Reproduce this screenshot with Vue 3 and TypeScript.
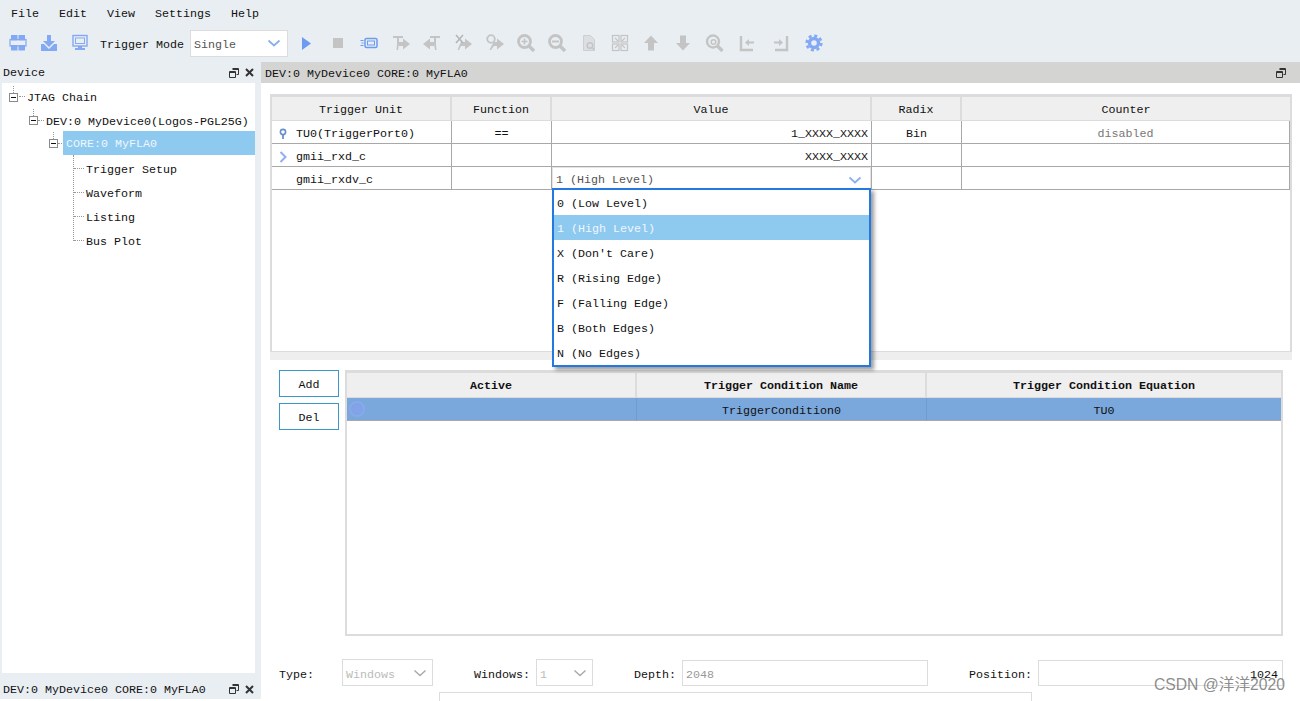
<script setup lang="ts">
const menus: string[] = ['File', 'Edit', 'View', 'Settings', 'Help']
const leaves: string[] = ['Trigger Setup', 'Waveform', 'Listing', 'Bus Plot']
const options: string[] = [
  '0 (Low Level)',
  '1 (High Level)',
  "X (Don't Care)",
  'R (Rising Edge)',
  'F (Falling Edge)',
  'B (Both Edges)',
  'N (No Edges)'
]
const headers: string[] = ['Trigger Unit', 'Function', 'Value', 'Radix', 'Counter']
const condHeaders: string[] = ['Active', 'Trigger Condition Name', 'Trigger Condition Equation']
</script>

<template>
  <div class="app">
    <div class="menubar">
      <span v-for="m in menus" :key="m">{{ m }}</span>
    </div>

    <div class="toolbar">
      <span class="tool">
        <svg width="20" height="20" viewBox="0 0 20 20"><g class="blue"><rect x="3" y="2" width="6.500" height="5.500"/><rect x="10.500" y="2" width="6.500" height="5.500"/><rect x="3" y="12" width="6.500" height="5.500"/><rect x="10.500" y="12" width="6.500" height="5.500"/></g><rect x="2" y="6.500" width="16" height="6.500" fill="none" stroke="#84a9f4" stroke-width="1.200"/></svg>
      </span>
      <span class="tool">
        <svg width="20" height="20" viewBox="0 0 20 20"><g class="blue"><path d="M8 2h4v6h4l-6 6-6-6h4z"/><path d="M2 11h3l5 5 5-5h3v7H2z"/></g></svg>
      </span>
      <span class="tool">
        <svg width="20" height="20" viewBox="0 0 20 20"><g fill="none" stroke="#84a9f4"><rect x="3" y="2.500" width="14" height="10.500" stroke-width="1.400"/><rect x="5.500" y="5" width="9" height="5.500"/></g><g class="blue"><rect x="8" y="13" width="4" height="2"/><rect x="5" y="15" width="10" height="2"/></g></svg>
      </span>
      <span class="trig-label">Trigger Mode</span>
      <div class="combo mode">
        <span>Single</span>
        <svg width="14" height="8" viewBox="0 0 14 8"><path d="M1.500 1.500 7 6.500l5.500-5" fill="none" stroke="#8ab0f0" stroke-width="1.800"/></svg>
      </div>
      <div class="tools">
        <span class="tool"><svg width="20" height="20" viewBox="0 0 20 20"><path d="M5 4l9 6.500L5 17z" fill="#6e9bf0"/></svg></span>
        <span class="tool"><svg width="20" height="20" viewBox="0 0 20 20"><rect x="5" y="5" width="10" height="10" fill="#c4c4c4"/></svg></span>
        <span class="tool"><svg width="20" height="20" viewBox="0 0 20 20"><g fill="none" stroke="#6e9bf0"><rect x="6" y="5.500" width="12" height="9" rx="1.500" stroke-width="1.500"/><rect x="8.500" y="8" width="7" height="4"/><path d="M1.500 7.500h3M2.500 10h2M1.500 12.500h3"/></g></svg></span>
        <span class="tool"><svg width="20" height="20" viewBox="0 0 20 20"><g class="gray"><path d="M2 3h10v2H8v6l-1 6H5.500l.5-6V5H2z"/><path d="M8 9h4V5.500l7 5.500-7 5.500V13H8z"/></g></svg></span>
        <span class="tool"><svg width="20" height="20" viewBox="0 0 20 20"><g class="gray"><path d="M18 3H8v2h4v6l1 6h1.500l-.5-6V5h4z"/><path d="M12 9H8V5.500L1 11l7 5.500V13h4z"/></g></svg></span>
        <span class="tool"><svg width="20" height="20" viewBox="0 0 20 20"><g class="gray"><path d="M8 9h4V5.500l7 5.500-7 5.500V13H8l-2 4H4.500l2-5z"/></g><path d="M3 2l7 8M10 2l-7 8" stroke="#b4b4b4" stroke-width="1.500"/></svg></span>
        <span class="tool"><svg width="20" height="20" viewBox="0 0 20 20"><g class="gray"><path d="M9 9h3V5.500l7 5.500-7 5.500V13H9l-3 4H4.500l2.500-5z"/></g><circle cx="6" cy="6" r="3.800" fill="none" stroke="#c4c4c4" stroke-width="1.800"/></svg></span>
        <span class="tool"><svg width="20" height="20" viewBox="0 0 20 20"><circle cx="8.500" cy="8.500" r="6" fill="none" stroke="#c4c4c4" stroke-width="2.800"/><path d="M13 13l5 5" stroke="#c4c4c4" stroke-width="3.400"/><path d="M5.500 8.500h6M8.500 5.500v6" stroke="#c4c4c4" stroke-width="1.600"/></svg></span>
        <span class="tool"><svg width="20" height="20" viewBox="0 0 20 20"><circle cx="8.500" cy="8.500" r="6" fill="none" stroke="#c4c4c4" stroke-width="2.800"/><path d="M13 13l5 5" stroke="#c4c4c4" stroke-width="3.400"/><path d="M5 8.500h7" stroke="#c4c4c4" stroke-width="2"/></svg></span>
        <span class="tool"><svg width="20" height="20" viewBox="0 0 20 20"><path d="M4.500 2.500h7l4 4v11h-11z" fill="#dcdfe2" stroke="#cfcfcf"/><circle cx="11" cy="12.500" r="2.800" fill="none" stroke="#c4c4c4" stroke-width="1.500"/><path d="M13 14.500l2.500 2.500" stroke="#c4c4c4" stroke-width="1.500"/></svg></span>
        <span class="tool"><svg width="20" height="20" viewBox="0 0 20 20"><g fill="none" stroke="#c4c4c4" stroke-width="1.200"><rect x="2.500" y="2.500" width="6.500" height="6.500"/><rect x="11" y="2.500" width="6.500" height="6.500"/><rect x="2.500" y="11" width="6.500" height="6.500"/><rect x="11" y="11" width="6.500" height="6.500"/><path d="M8 8 5 5M12 8l3-3M8 12l-3 3M12 12l3 3"/></g></svg></span>
        <span class="tool"><svg width="20" height="20" viewBox="0 0 20 20"><path d="M10 2.500l7 7.500h-4v7.500H7V10H3z" fill="#c4c4c4"/></svg></span>
        <span class="tool"><svg width="20" height="20" viewBox="0 0 20 20"><path d="M10 17.500L3 10h4V2.500h6V10h4z" fill="#c4c4c4"/></svg></span>
        <span class="tool"><svg width="20" height="20" viewBox="0 0 20 20"><circle cx="9" cy="8.500" r="6" fill="none" stroke="#c4c4c4" stroke-width="2.400"/><circle cx="9.500" cy="9" r="2.300" fill="none" stroke="#c4c4c4" stroke-width="1.500"/><path d="M13.500 13l5 5" stroke="#c4c4c4" stroke-width="3.400"/></svg></span>
        <span class="tool"><svg width="20" height="20" viewBox="0 0 20 20"><path d="M4 3v14h12" fill="none" stroke="#c4c4c4" stroke-width="2.400"/><path d="M8 9.500l4-3.500v2.500h5v2h-5V13z" fill="#c4c4c4"/></svg></span>
        <span class="tool"><svg width="20" height="20" viewBox="0 0 20 20"><path d="M16 3v14H4" fill="none" stroke="#c4c4c4" stroke-width="2.400"/><path d="M12 9.500L8 6v2.500H3v2h5V13z" fill="#c4c4c4"/></svg></span>
        <span class="tool"><svg width="20" height="20" viewBox="0 0 20 20"><circle cx="10" cy="10" r="4.500" fill="none" stroke="#84a9f4" stroke-width="3.400"/><circle cx="10" cy="10" r="7.300" fill="none" stroke="#84a9f4" stroke-width="2.600" stroke-dasharray="3.100 2.630"/></svg></span>
      </div>
    </div>

    <div class="workspace">
      <aside class="side">
        <div class="dock-head">
          <span>Device</span>
          <span class="dock-icons">
            <svg width="10" height="10" viewBox="0 0 10 10"><path d="M3.500.5h6v6h-2M.5 3.500h6v6h-6z M.5 4.500h6M3.500 1.500h6" fill="none" stroke="#333"/></svg>
            <svg width="9" height="9" viewBox="0 0 9 9"><path d="M1 1l7 7M8 1L1 8" stroke="#333" stroke-width="2"/></svg>
          </span>
        </div>
        <div class="tree">
          <div class="node n0"><i class="box"></i><span class="lbl">JTAG Chain</span></div>
          <div class="node n1"><i class="box"></i><span class="lbl">DEV:0 MyDevice0(Logos-PGL25G)</span></div>
          <div class="node n2"><i class="box"></i><span class="lbl sel">CORE:0 MyFLA0</span></div>
          <div class="leaves">
            <div v-for="l in leaves" :key="l" class="leaf">{{ l }}</div>
          </div>
        </div>
        <div class="dock-head bottom">
          <span class="bottom-text">DEV:0 MyDevice0 CORE:0 MyFLA0</span>
          <span class="dock-icons">
            <svg width="10" height="10" viewBox="0 0 10 10"><path d="M3.500.5h6v6h-2M.5 3.500h6v6h-6z M.5 4.500h6M3.500 1.500h6" fill="none" stroke="#333"/></svg>
            <svg width="9" height="9" viewBox="0 0 9 9"><path d="M1 1l7 7M8 1L1 8" stroke="#333" stroke-width="2"/></svg>
          </span>
        </div>
      </aside>

      <main class="main">
        <div class="title">
          <span>DEV:0 MyDevice0 CORE:0 MyFLA0</span>
          <svg width="10" height="10" viewBox="0 0 10 10"><path d="M3.500.5h6v6h-2M.5 3.500h6v6h-6z M.5 4.500h6M3.500 1.500h6" fill="none" stroke="#333"/></svg>
        </div>

        <section class="units">
          <div class="grid">
            <div v-for="h in headers" :key="h" class="th">{{ h }}</div>

            <div class="td first">
              <svg class="row-icon" width="10" height="12" viewBox="0 0 10 12"><circle cx="5" cy="4" r="2.600" fill="none" stroke="#6a8fcb" stroke-width="1.600"/><path d="M5 6.500V11" stroke="#6a8fcb" stroke-width="1.800"/></svg>
              <span>TU0(TriggerPort0)</span>
            </div>
            <div class="td center">==</div>
            <div class="td right">1_XXXX_XXXX</div>
            <div class="td center">Bin</div>
            <div class="td center muted">disabled</div>

            <div class="td first">
              <svg class="row-icon" width="10" height="12" viewBox="0 0 10 12"><path d="M2.500 1l5 5-5 5" fill="none" stroke="#8eb0f0" stroke-width="2"/></svg>
              <span>gmii_rxd_c</span>
            </div>
            <div class="td"></div>
            <div class="td right">XXXX_XXXX</div>
            <div class="td"></div>
            <div class="td"></div>

            <div class="td first">
              <span class="row-icon"></span>
              <span>gmii_rxdv_c</span>
            </div>
            <div class="td"></div>
            <div class="td combo-cell">
              <div class="cell-combo">
                <span>1 (High Level)</span>
                <svg width="14" height="8" viewBox="0 0 14 8"><path d="M1.500 1.500 7 6.500l5.500-5" fill="none" stroke="#8ab0f0" stroke-width="1.800"/></svg>
              </div>
              <ul class="popup">
                <li v-for="(o, i) in options" :key="o" :class="{ on: i === 1 }">{{ o }}</li>
              </ul>
            </div>
            <div class="td"></div>
            <div class="td"></div>
          </div>
        </section>
        <div class="strip"></div>

        <section class="conds">
          <div class="btns">
            <button type="button">Add</button>
            <button type="button">Del</button>
          </div>
          <div class="cond-table">
            <div class="cond-grid">
              <div v-for="h in condHeaders" :key="h" class="cth">{{ h }}</div>
              <div class="ctd act"><span class="radio"><span></span></span></div>
              <div class="ctd">TriggerCondition0</div>
              <div class="ctd end">TU0</div>
            </div>
          </div>
        </section>

        <section class="form">
          <label class="f-type">Type:</label>
          <div class="combo off w-type"><span>Windows</span><svg width="14" height="8" viewBox="0 0 14 8"><path d="M1.500 1.500 7 6.500l5.500-5" fill="none" stroke="#aaa" stroke-width="1.500"/></svg></div>
          <label>Windows:</label>
          <div class="combo off w-win"><span>1</span><svg width="14" height="8" viewBox="0 0 14 8"><path d="M1.500 1.500 7 6.500l5.500-5" fill="none" stroke="#aaa" stroke-width="1.500"/></svg></div>
          <label>Depth:</label>
          <div class="field depth">2048</div>
          <label>Position:</label>
          <div class="field pos">1024</div>
        </section>
        <div class="extra"></div>
      </main>
    </div>

    <div class="watermark">CSDN @洋洋2020</div>
  </div>
</template>

<style>
html, body { margin: 0; overflow: hidden; background: #e9eef2; }
</style>

<style scoped>
.app {
  position: relative;
  width: 1300px;
  height: 701px;
  overflow: hidden;
  background: #e9eef2;
  color: #111;
  font-family: "Liberation Mono", monospace;
  font-size: 11.67px;
  line-height: 14px;
  display: flex;
  flex-direction: column;
}
.menubar {
  height: 28px;
  display: flex;
  align-items: center;
  gap: 20px;
  padding: 0 0 2px 11px;
  box-sizing: border-box;
}
.menubar span { padding-top: 2px; }
.toolbar {
  height: 34px;
  display: flex;
  align-items: center;
  padding: 0 0 4px 2px;
  box-sizing: border-box;
}
.tool {
  flex: 0 0 31px;
  display: flex;
  justify-content: center;
  align-items: center;
}
.blue { fill: #84a9f4; }
.gray { fill: #c4c4c4; }
.trig-label { margin-left: 5px; width: 84px; padding-top: 4px; }
.combo {
  box-sizing: border-box;
  display: flex;
  align-items: center;
  justify-content: space-between;
  background: #fff;
  border: 1px solid #dcdcdc;
  padding: 0 6px 0 3px;
}
.combo span { padding-top: 4px; }
.mode { margin-left: 6px; width: 98px; height: 27px; color: #555; }
.tools { display: flex; margin-left: 3px; }
.tools .tool { flex: 0 0 31.35px; }
.tools .tool:nth-last-child(-n+3) { margin-left: 2px; }

.workspace { flex: 1; display: flex; min-height: 0; }
.side { width: 261px; display: flex; flex-direction: column; }
.dock-head {
  height: 21px;
  display: flex;
  align-items: center;
  justify-content: space-between;
  padding: 0 7px 0 3px;
}
.dock-head.bottom {
  height: 28px;
  box-sizing: border-box;
  padding-top: 6px;
  border-bottom: 2px solid #fff;
}
.bottom-text { padding-top: 2px; }
.dock-icons { display: flex; align-items: center; gap: 6px; }
.tree {
  flex: 1;
  margin: 0 6px 0 2px;
  background: #fff;
  padding-top: 2px;
}
.node { position: relative; display: flex; align-items: center; }
.n0 { height: 24px; padding-left: 7px; }
.n1 { height: 22px; padding-left: 27px; padding-top: 1px; box-sizing: border-box; }
.n2 { height: 24px; padding-left: 47px; }
.box {
  position: relative;
  box-sizing: border-box;
  width: 9px;
  height: 9px;
  border: 1px solid #8a8a8a;
  flex: none;
}
.box::before {
  content: "";
  position: absolute;
  left: 1px;
  top: 3px;
  width: 5px;
  height: 1px;
  background: #111;
}
.box::after {
  content: "";
  position: absolute;
  left: 3px;
  top: -8px;
  height: 7px;
  border-left: 1px dotted #999;
}
.lbl { position: relative; margin-left: 9px; padding-top: 2px; white-space: nowrap; }
.n1 .lbl { margin-left: 8px; }
.lbl::before {
  content: "";
  position: absolute;
  left: -8px;
  top: 7px;
  width: 6px;
  border-top: 1px dotted #999;
}
.n2 .lbl { margin-left: 5px; }
.n2 .lbl::before { left: -5px; width: 4px; }
.sel {
  flex: 1;
  align-self: stretch;
  display: flex;
  align-items: center;
  padding-left: 3px;
  padding-top: 2px;
  background: #8ec9f0;
  color: #eef7fd;
}
.sel.lbl::before { top: 12px; }
.leaves { position: relative; margin: 2px 0 0 71px; }
.leaves::before {
  content: "";
  position: absolute;
  left: 0;
  top: -2px;
  bottom: 12px;
  border-left: 1px dotted #999;
}
.leaf {
  position: relative;
  box-sizing: border-box;
  height: 24px;
  padding-top: 6px;
  padding-left: 13px;
}
.leaf::before {
  content: "";
  position: absolute;
  left: 1px;
  top: 11px;
  width: 10px;
  border-top: 1px dotted #999;
}

.main {
  flex: 1;
  min-width: 0;
  background: #fff;
  display: flex;
  flex-direction: column;
}
.title {
  flex: none;
  height: 21px;
  background: #d4d4d2;
  display: flex;
  align-items: center;
  justify-content: space-between;
  padding: 0 14px 0 4px;
}
.title span { padding-top: 2px; }
.units {
  flex: none;
  box-sizing: border-box;
  width: 1022px;
  height: 258px;
  margin: 11px 0 0 9px;
  border: solid #dcdcdc;
  border-width: 3px 2px 1px;
}
.strip { flex: none; width: 1022px; height: 8px; margin-left: 9px; background: #eeeeee; }
.grid {
  display: grid;
  grid-template-columns: 180px 100px 320px 90px 1fr;
  grid-auto-rows: 23px;
}
.th {
  height: 24px;
  box-sizing: border-box;
  padding-top: 2px;
  background: #efefef;
  border-right: 2px solid #dcdcdc;
  border-bottom: 1px solid #dcdcdc;
  display: flex;
  align-items: center;
  justify-content: center;
}
.th:nth-child(5) { border-right: 0; }
.td {
  box-sizing: border-box;
  height: 23px;
  padding-top: 4px;
  border-right: 1px solid #a8a8a8;
  border-bottom: 1px solid #a8a8a8;
  display: flex;
  align-items: center;
  margin-top: 1px;
  margin-bottom: -1px;
}
.first { padding-left: 6px; gap: 8px; }
.row-icon { width: 10px; flex: none; }
.center { justify-content: center; }
.right { justify-content: flex-end; padding-right: 3px; }
.muted { color: #777; }
.combo-cell { position: relative; overflow: visible; padding-top: 0; }
.cell-combo {
  box-sizing: border-box;
  flex: 1;
  height: 100%;
  display: flex;
  align-items: center;
  justify-content: space-between;
  padding: 4px 8px 0 3px;
  border: 1px solid #e4e4e4;
  color: #555;
}
.popup {
  position: absolute;
  z-index: 5;
  left: 0;
  top: 21px;
  box-sizing: border-box;
  width: 319px;
  height: 179px;
  margin: 0;
  padding: 0;
  list-style: none;
  background: #fff;
  border: 2px solid #2479e0;
  box-shadow: 3px 3px 4px rgba(0, 0, 0, 0.4);
}
.popup li {
  box-sizing: border-box;
  height: 25px;
  padding: 7px 0 0 3px;
}
.popup li.on { background: #8ec9f0; color: #eef7fd; }

.conds {
  flex: none;
  display: flex;
  height: 266px;
  margin: 10px 0 0 18px;
  gap: 6px;
}
.btns { display: flex; flex-direction: column; gap: 6px; width: 60px; }
.btns button {
  box-sizing: border-box;
  height: 27px;
  padding: 2px 0 0;
  background: #fff;
  border: 1px solid #3a97c9;
  font: inherit;
  color: #111;
}
.cond-table {
  box-sizing: border-box;
  width: 938px;
  border: solid #dcdcdc;
  border-width: 3px 2px 2px;
}
.cond-grid {
  display: grid;
  grid-template-columns: 290px 290px 1fr;
  grid-template-rows: 25px 23px;
}
.cth {
  box-sizing: border-box;
  padding-top: 2px;
  background: #efefef;
  border-right: 2px solid #dcdcdc;
  border-bottom: 1px solid #dcdcdc;
  display: flex;
  align-items: center;
  justify-content: center;
  font-weight: 700;
}
.cth:nth-child(3) { border-right: 0; }
.ctd {
  box-sizing: border-box;
  background: #7aa7dc;
  border-right: 1px solid #6f9bcf;
  border-bottom: 1px solid #a8a8a8;
  display: flex;
  align-items: center;
  justify-content: center;
  padding-top: 3px;
}
.act { justify-content: flex-start; padding-top: 0; }
.end { border-right: 0; }
.radio {
  box-sizing: border-box;
  width: 16px;
  height: 16px;
  margin-left: 2px;
  border-radius: 50%;
  border: 2px solid #8aa8ee;
  display: flex;
  align-items: center;
  justify-content: center;
}
.radio span { width: 8px; height: 8px; border-radius: 50%; background: #86a0ee; }

.form {
  flex: none;
  display: flex;
  align-items: center;
  height: 27px;
  margin: 23px 0 0 18px;
}
.form label { margin-right: 6px; padding-top: 4px; }
.f-type { width: 57px; }
.off { color: #bbb; padding-right: 5px; height: 27px; }
.w-type { width: 91px; margin-right: 41px; }
.w-win { width: 57px; margin-right: 41px; }
.field {
  box-sizing: border-box;
  height: 26px;
  border: 1px solid #dcdcdc;
  display: flex;
  align-items: center;
  padding: 4px 4px 0 3px;
}
.depth { width: 246px; margin-right: 41px; color: #999; }
.pos { width: 245px; justify-content: flex-end; }
.extra {
  flex: none;
  box-sizing: border-box;
  width: 593px;
  height: 20px;
  margin: 6px 0 0 178px;
  border: 1px solid #dcdcdc;
}
.watermark {
  position: absolute;
  left: 1154px;
  top: 675px;
  font-family: "Liberation Sans", "Noto Sans CJK SC", sans-serif;
  font-size: 15.7px;
  line-height: 20px;
  color: rgba(110, 110, 110, 0.8);
  white-space: nowrap;
}
</style>
